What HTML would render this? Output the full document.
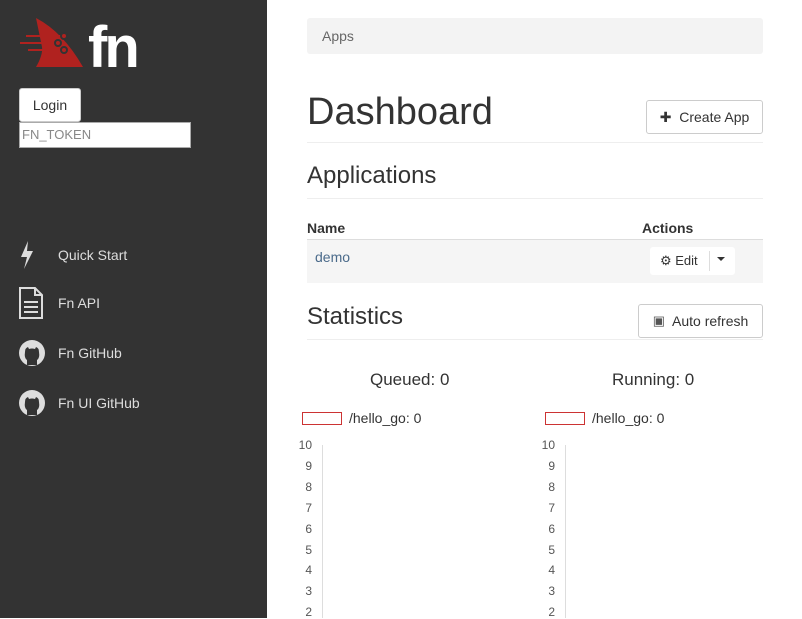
<!DOCTYPE html>
<html><head><meta charset="utf-8"><style>
*{box-sizing:border-box;margin:0;padding:0}
body{width:802px;height:618px;overflow:hidden;font-family:"Liberation Sans",sans-serif;background:#fff;position:relative;color:#333}
#side{position:absolute;left:0;top:0;width:267px;height:618px;background:#333}
.nav{position:absolute;left:18px;color:#ddd;font-size:14px;display:flex;align-items:center}
.nav span{position:absolute;left:40px;white-space:nowrap}
.abs{position:absolute}
.btn{position:absolute;border:1px solid #ccc;border-radius:3px;background:#fff;font-size:14px;color:#333;display:flex;align-items:center;justify-content:center}
hr{position:absolute;left:307px;width:456px;border:0;border-top:1px solid #eee}
.ax{position:absolute;font-size:12px;color:#555;text-align:right;width:20px}
</style></head><body>
<div id="side">
<svg class="abs" style="left:18px;top:17px" width="135" height="52" viewBox="0 0 135 52">
<path d="M18 1 Q45 15 65 50 L18 50 Q25 38 24 30 Z" fill="#b0221f"/>
<g stroke="#b0221f" stroke-width="2" fill="none"><line x1="2" y1="26" x2="40" y2="26"/><line x1="8" y1="19" x2="44" y2="19"/><line x1="10" y1="33" x2="44" y2="33"/></g>
<g stroke="#333" stroke-width="2" fill="#b0221f"><circle cx="40" cy="26" r="3"/><circle cx="46" cy="19" r="3"/><circle cx="46" cy="33" r="3"/></g>
<text x="70" y="50" font-family="Liberation Sans" font-weight="bold" font-size="58" fill="#fff" letter-spacing="-3">fn</text>
</svg>
<div class="btn" style="left:19px;top:88px;width:62px;height:34px;font-size:14px">Login</div>
<div class="abs" style="left:19px;top:122px;width:172px;height:26px;background:#fff;border:1px solid #aaa;font-size:13px;color:#888;padding:4px 2px">FN_TOKEN</div>
<div class="nav" style="top:240px"><svg width="18" height="30" viewBox="0 0 18 30"><path d="M10 1 L3 17 L9 17 L6 29 L15 11 L9 11 Z" fill="#ddd"/></svg><span>Quick Start</span></div>
<div class="nav" style="top:287px"><svg width="26" height="32" viewBox="0 0 26 32"><path d="M2 1 H17 L24 8 V31 H2 Z M17 1 V8 H24" fill="none" stroke="#ddd" stroke-width="2"/><g stroke="#ddd" stroke-width="2"><line x1="6" y1="15" x2="20" y2="15"/><line x1="6" y1="20" x2="20" y2="20"/><line x1="6" y1="25" x2="20" y2="25"/></g></svg><span>Fn API</span></div>
<div class="nav" style="top:339px"><svg width="28" height="28" viewBox="0 0 28 28"><circle cx="14" cy="14" r="13" fill="#ddd"/><path d="M9 26 V21 Q6 19 7 13 Q7 9 10 8 L11 10 Q14 9 17 10 L18 8 Q21 9 21 13 Q22 19 19 21 V26 Z" fill="#333"/></svg><span>Fn GitHub</span></div>
<div class="nav" style="top:389px"><svg width="28" height="28" viewBox="0 0 28 28"><circle cx="14" cy="14" r="13" fill="#ddd"/><path d="M9 26 V21 Q6 19 7 13 Q7 9 10 8 L11 10 Q14 9 17 10 L18 8 Q21 9 21 13 Q22 19 19 21 V26 Z" fill="#333"/></svg><span>Fn UI GitHub</span></div>
</div>
<div class="abs" style="left:307px;top:18px;width:456px;height:36px;background:#f3f3f3;border-radius:3px;font-size:14px;color:#666;padding:10px 15px">Apps</div>
<div class="abs" style="left:307px;top:91px;font-size:38px;color:#333">Dashboard</div>
<div class="btn" style="left:646px;top:100px;width:117px;height:34px">✚&nbsp; Create App</div>
<hr style="top:142px">
<div class="abs" style="left:307px;top:162px;font-size:24px">Applications</div>
<hr style="top:198px">
<div class="abs" style="left:307px;top:220px;font-size:14px;font-weight:bold">Name</div>
<div class="abs" style="left:642px;top:220px;font-size:14px;font-weight:bold">Actions</div>
<div class="abs" style="left:307px;top:239px;width:456px;height:44px;background:#f5f5f5;border-top:1px solid #ddd"></div>
<div class="abs" style="left:315px;top:249px;font-size:14px;color:#4a6a8a">demo</div>
<div class="abs" style="left:650px;top:247px;width:85px;height:28px;background:#fff;border-radius:3px;font-size:13px;padding:6px 10px">⚙ Edit<span style="position:absolute;left:59px;top:4px;height:20px;border-left:1px solid #ddd"></span><span style="position:absolute;left:67px;top:10px;width:0;height:0;border-left:4px solid transparent;border-right:4px solid transparent;border-top:4px solid #333"></span></div>
<div class="abs" style="left:307px;top:303px;font-size:24px">Statistics</div>
<div class="btn" style="left:638px;top:304px;width:125px;height:34px"><span style="font-size:13px;color:#555">▣</span>&nbsp; Auto refresh</div>
<hr style="top:339px">
<div class="abs" style="left:370px;top:370px;font-size:17px">Queued: 0</div>
<div class="abs" style="left:612px;top:370px;font-size:17px">Running: 0</div>
<div class="abs" style="left:302px;top:412px;width:40px;height:13px;border:1px solid #c33"></div>
<div class="abs" style="left:349px;top:410px;font-size:14px">/hello_go: 0</div>
<div class="abs" style="left:545px;top:412px;width:40px;height:13px;border:1px solid #c33"></div>
<div class="abs" style="left:592px;top:410px;font-size:14px">/hello_go: 0</div>
<div class="abs" style="left:322px;top:445px;height:173px;border-left:1px solid #ddd"></div>
<div class="abs" style="left:565px;top:445px;height:173px;border-left:1px solid #ddd"></div>
<div class="ax" style="left:292px;top:438px">10</div><div class="ax" style="left:292px;top:459px">9</div><div class="ax" style="left:292px;top:480px">8</div><div class="ax" style="left:292px;top:501px">7</div><div class="ax" style="left:292px;top:522px">6</div><div class="ax" style="left:292px;top:543px">5</div><div class="ax" style="left:292px;top:563px">4</div><div class="ax" style="left:292px;top:584px">3</div><div class="ax" style="left:292px;top:605px">2</div>
<div class="ax" style="left:535px;top:438px">10</div><div class="ax" style="left:535px;top:459px">9</div><div class="ax" style="left:535px;top:480px">8</div><div class="ax" style="left:535px;top:501px">7</div><div class="ax" style="left:535px;top:522px">6</div><div class="ax" style="left:535px;top:543px">5</div><div class="ax" style="left:535px;top:563px">4</div><div class="ax" style="left:535px;top:584px">3</div><div class="ax" style="left:535px;top:605px">2</div>
</body></html>
